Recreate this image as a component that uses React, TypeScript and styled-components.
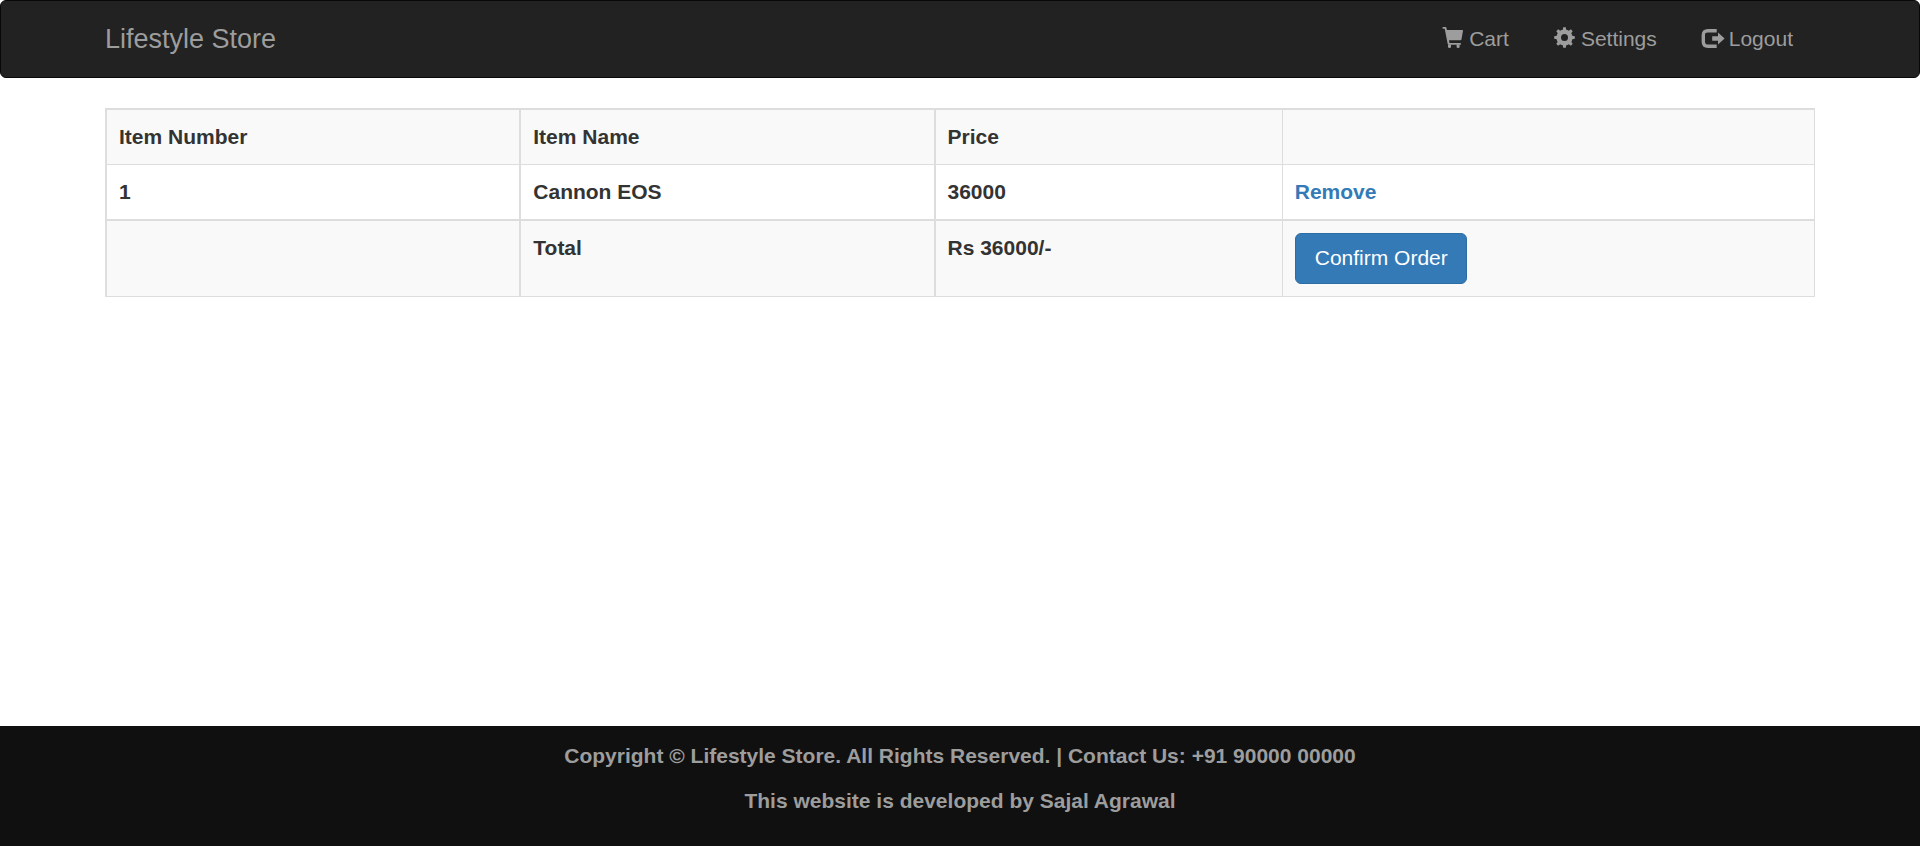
import React from 'react';
import styled, { createGlobalStyle } from 'styled-components';

const GlobalStyle = createGlobalStyle`
  *, *::before, *::after { box-sizing: border-box; }
  body {
    margin: 0;
    background: #fff;
    color: #333;
    font-family: "Liberation Sans", Arial, sans-serif;
    font-size: 21px;
    line-height: 30px;
  }
`;

const Page = styled.div`
  display: flex;
  flex-direction: column;
  min-height: 100vh;
`;

const Container = styled.div`
  width: 100%;
  max-width: 1756px;
  margin: 0 auto;
  padding: 0 23px;
`;

const Navbar = styled.nav`
  background: #222;
  border: 1px solid #080808;
  border-radius: 6px;
  margin-bottom: 30px;
`;

const NavbarInner = styled(Container)`
  display: flex;
  flex-wrap: wrap;
  justify-content: space-between;
`;

const Brand = styled.a`
  padding: 23px 0;
  color: #9d9d9d;
  font-size: 27px;
  text-decoration: none;
`;

const NavList = styled.ul`
  display: flex;
  flex-wrap: wrap;
  gap: 1px;
  margin: 0;
  padding: 0;
  list-style: none;
`;

const NavLink = styled.a`
  display: flex;
  align-items: center;
  gap: 6px;
  padding: 23px 22px;
  color: #9d9d9d;
  text-decoration: none;
`;

const Icon = styled.svg`
  width: 21px;
  height: 21px;
  margin-bottom: 3px;
  overflow: visible;
  fill: currentColor;
`;

const OrderTable = styled.table`
  width: 100%;
  border-collapse: separate;
  border-spacing: 0;
  border: solid #ddd;
  border-width: 0 1px 1px 0;
  font-weight: bold;

  tr:nth-child(odd) { background: #f9f9f9; }
`;

const Cell = styled.td<{ $heavyTop?: boolean }>`
  padding: 12px 11px 12px 12px;
  border: solid #ddd;
  border-width: ${(p) => (p.$heavyTop ? 2 : 1)}px 0 0 2px;
  text-align: left;
  vertical-align: top;

  &:last-child {
    padding-right: 12px;
    border-left-width: 1px;
  }
`;

const RemoveLink = styled.a`
  color: #337ab7;
  text-decoration: none;
`;

const ConfirmButton = styled.button`
  display: block;
  padding: 9px 18px 10px 19px;
  border: 1px solid #2e6da4;
  border-radius: 6px;
  background: #337ab7;
  color: #fff;
  font: inherit;
  font-weight: normal;
  white-space: nowrap;
  cursor: pointer;
`;

const Footer = styled.footer`
  margin-top: auto;
  padding: 15px 23px;
  background: #101010;
  color: #9d9d9d;
  font-weight: bold;
  text-align: center;
`;

const FooterLine = styled.p`
  margin: 0 0 15px;
`;

const CartIcon = () => (
  <Icon viewBox="0 0 21 21" aria-hidden="true">
    <path d="M1.2 0H3.4Q4.2 0 4.4 .8L4.9 3H20.4Q21.2 3 21 3.8L19.5 12.2Q19.3 13.2 18.3 13.2H7L7.5 16H18.2Q19 16 19 16.9Q19 17.8 18.2 17.8H6.7Q5.9 17.8 5.7 17L2.7 1.7H1.2Q.4 1.7 .4 .9Q.4 0 1.2 0Z" />
    <path d="M6 17.5H9V20Q9 21 7.5 21Q6 21 6 20ZM14.6 17.5H17.6V20Q17.6 21 16.1 21Q14.6 21 14.6 20Z" />
  </Icon>
);

const CogIcon = () => (
  <Icon viewBox="0 0 21 21" aria-hidden="true">
    <circle cx="10.5" cy="10.5" r="5.8" fill="none" stroke="currentColor" strokeWidth="4.6" />
    {[0, 45, 90, 135, 180, 225, 270, 315].map((angle) => (
      <path key={angle} d="M8.6 4L9.2 .2H11.8L12.4 4Z" transform={`rotate(${angle} 10.5 10.5)`} />
    ))}
  </Icon>
);

const LogoutIcon = () => (
  <Icon viewBox="0 0 21 21" aria-hidden="true">
    <path d="M14.7 3.7H6Q1.3 3.7 1.3 8.2V14.8Q1.3 19.3 6 19.3H14.7" fill="none" stroke="currentColor" strokeWidth="3.4" />
    <path d="M10.2 9.2H16V5.4L22.6 11.5L16 17.6V13.8H10.2Z" />
  </Icon>
);

const navItems = [
  { label: 'Cart', href: '#cart', Glyph: CartIcon },
  { label: 'Settings', href: '#settings', Glyph: CogIcon },
  { label: 'Logout', href: '#logout', Glyph: LogoutIcon },
];

export default function App() {
  return (
    <Page>
      <GlobalStyle />
      <Navbar>
        <NavbarInner>
          <Brand href="#home">Lifestyle Store</Brand>
          <NavList>
            {navItems.map(({ label, href, Glyph }) => (
              <li key={label}>
                <NavLink href={href}>
                  <Glyph />
                  {label}
                </NavLink>
              </li>
            ))}
          </NavList>
        </NavbarInner>
      </Navbar>

      <Container as="main">
        <OrderTable>
          <tbody>
            <tr>
              <Cell as="th" scope="col" $heavyTop>Item Number</Cell>
              <Cell as="th" scope="col" $heavyTop>Item Name</Cell>
              <Cell as="th" scope="col" $heavyTop>Price</Cell>
              <Cell $heavyTop />
            </tr>
            <tr>
              <Cell>1</Cell>
              <Cell>Cannon EOS</Cell>
              <Cell>36000</Cell>
              <Cell><RemoveLink href="#remove">Remove</RemoveLink></Cell>
            </tr>
            <tr>
              <Cell $heavyTop />
              <Cell $heavyTop>Total</Cell>
              <Cell $heavyTop>Rs 36000/-</Cell>
              <Cell $heavyTop>
                <ConfirmButton type="button">Confirm Order</ConfirmButton>
              </Cell>
            </tr>
          </tbody>
        </OrderTable>
      </Container>

      <Footer>
        <FooterLine>Copyright © Lifestyle Store. All Rights Reserved. | Contact Us: +91 90000 00000</FooterLine>
        <FooterLine>This website is developed by Sajal Agrawal</FooterLine>
      </Footer>
    </Page>
  );
}
